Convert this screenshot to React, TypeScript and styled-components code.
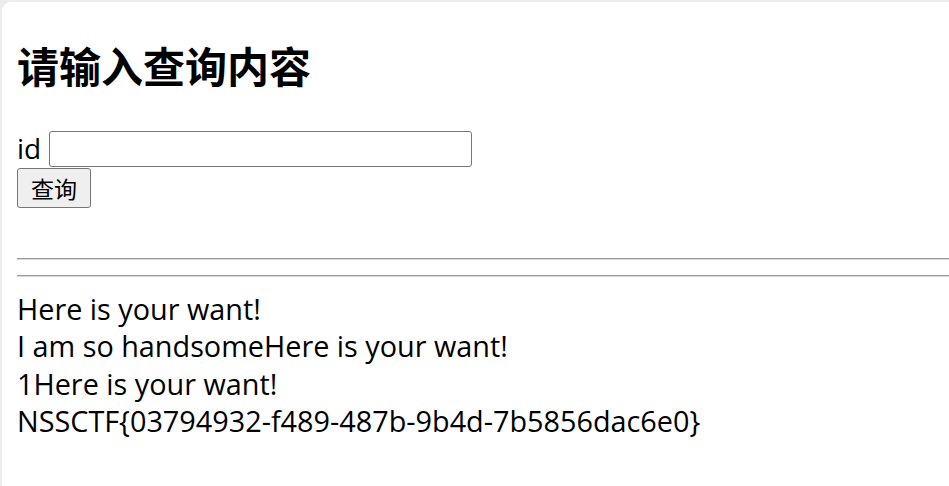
import styled, { createGlobalStyle } from 'styled-components';

const GlobalStyle = createGlobalStyle`
  html, body {
    margin: 0;
    padding: 0;
    background: #ececec;
  }
  #root {
    min-height: 100vh;
  }
`;

const Frame = styled.div`
  box-sizing: border-box;
  min-height: 100vh;
  padding: 2px 0 0 2px;
`;

const Page = styled.main`
  box-sizing: border-box;
  min-height: calc(100vh - 2px);
  background: #fff;
  border-top-left-radius: 9px;
  padding: 1px 0 14px 15px;
  color: #000;
  font-family: 'Open Sans', 'Noto Sans CJK SC', sans-serif;
  font-size: 28px;
`;

const Heading = styled.h2`
  margin: 34px 0 37px;
  font-family: 'Noto Sans CJK SC', sans-serif;
  font-size: 42px;
  font-weight: 700;
  line-height: 56px;
`;

const Form = styled.form`
  display: flex;
  flex-direction: column;
  align-items: flex-start;
`;

const IdRow = styled.div`
  display: flex;
  align-items: center;
  gap: 8px;
  height: 37px;
`;

const Label = styled.label`
  line-height: 37px;
`;

const Input = styled.input`
  box-sizing: border-box;
  width: 423px;
  height: 36px;
  border: 1px solid #767676;
  border-radius: 3px;
  padding: 0 4px;
  font-size: 22px;
  background: #fff;
`;

const Button = styled.button`
  box-sizing: border-box;
  width: 74px;
  height: 40px;
  margin-top: 1px;
  padding: 0;
  border: 1px solid #767676;
  border-radius: 3px;
  background: #efefef;
  font-family: 'Noto Sans CJK SC', sans-serif;
  font-size: 23px;
  color: #000;
`;

const Blank = styled.div`
  height: 35px;
`;

const Rule = styled.hr`
  margin: 15px 0 13px;
  height: 0;
  border: 0;
  border-top: 1px solid #9a9a9a;
  border-bottom: 1px solid #d8d8d8;
`;

const Output = styled.div`
  font-size: 28.8px;
  line-height: 37.3px;
  white-space: nowrap;
`;

const lines = [
  'Here is your want!',
  'I am so handsomeHere is your want!',
  '1Here is your want!',
  'NSSCTF{03794932-f489-487b-9b4d-7b5856dac6e0}',
];

export default function App() {
  return (
    <>
      <GlobalStyle />
      <Frame>
        <Page>
          <Heading>请输入查询内容</Heading>
          <Form onSubmit={(e) => e.preventDefault()}>
            <IdRow>
              <Label htmlFor="id">id</Label>
              <Input id="id" name="id" type="text" />
            </IdRow>
            <Button type="submit">查询</Button>
          </Form>
          <Blank />
          <Rule />
          <Rule />
          <Output>
            {lines.map((l) => (
              <div key={l}>{l}</div>
            ))}
          </Output>
        </Page>
      </Frame>
    </>
  );
}
